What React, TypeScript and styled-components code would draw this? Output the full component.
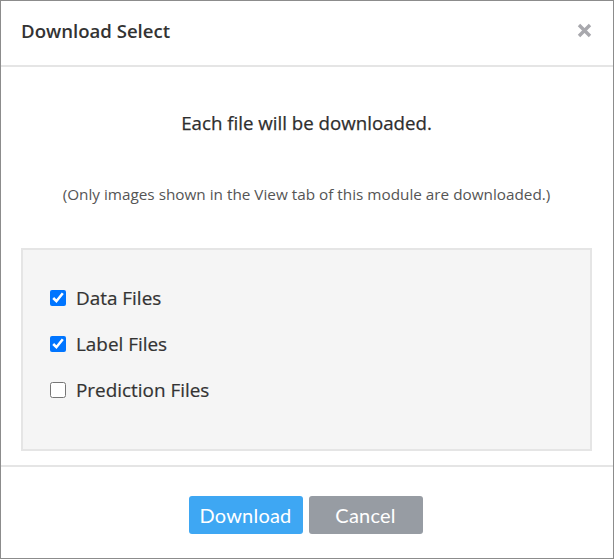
import React from "react";
import styled, { createGlobalStyle } from "styled-components";

const Global = createGlobalStyle`
  html, body { margin: 0; padding: 0; background: #fff; }
  body { font-family: "Open Sans", "Noto Sans", sans-serif; color: #333; }
`;

const Modal = styled.div`
  width: 614px;
  height: 559px;
  box-sizing: border-box;
  border: 1px solid #8c8c8c;
  display: flex;
  flex-direction: column;
  background: #fff;
`;

const Header = styled.div`
  height: 66px;
  box-sizing: border-box;
  flex: none;
  display: flex;
  align-items: center;
  justify-content: space-between;
  padding: 0 21px 6px 20px;
  border-bottom: 2px solid #e5e5e5;
`;

const Title = styled.h4`
  margin: 0;
  font-size: 18.6px;
  font-weight: 600;
  color: #333;
`;

const CloseButton = styled.button`
  border: none;
  background: none;
  padding: 0;
  width: 16px;
  height: 16px;
  display: flex;
  align-items: center;
  justify-content: center;
  cursor: pointer;
`;

const Body = styled.div`
  flex: 1;
  display: flex;
  flex-direction: column;
  align-items: stretch;
  padding: 0 21px 14px 20px;
  border-bottom: 2px solid #e5e5e5;
`;

const Lead = styled.p`
  margin: 43px 0 0;
  text-align: center;
  font-size: 18.7px;
  font-weight: 400;
  color: #2e2e2e;
  -webkit-text-stroke: 0.25px #2e2e2e;
`;

const Note = styled.p`
  margin: 49px 0 0;
  text-align: center;
  font-size: 15.3px;
  color: #555;
`;

const OptionsBox = styled.div`
  margin-top: 44px;
  flex: 1;
  background: #f5f5f5;
  border: 2px solid #e5e5e5;
  padding: 34px 27px;
  display: flex;
  flex-direction: column;
  gap: 18px;
`;

const Option = styled.label`
  display: flex;
  align-items: center;
  gap: 10px;
  font-size: 18.9px;
  font-weight: 400;
  color: #333;
  -webkit-text-stroke: 0.2px #333;
  height: 28px;
`;

const Check = styled.input`
  width: 16px;
  height: 16px;
  margin: 0;
  accent-color: #0075ff;
`;

const Footer = styled.div`
  flex: none;
  height: 91px;
  box-sizing: border-box;
  display: flex;
  align-items: center;
  justify-content: center;
  gap: 6px;
  padding: 4px 3px 0 0;
`;

const Button = styled.button<{ $variant: "primary" | "secondary" }>`
  width: 114px;
  height: 38px;
  border: none;
  border-radius: 3px;
  color: #fff;
  font-family: "Lato", "Open Sans", sans-serif;
  font-size: 20px;
  font-weight: 400;
  letter-spacing: 0.2px;
  background: ${(p) => (p.$variant === "primary" ? "#3ea7f3" : "#979ca3")};
  cursor: pointer;
`;

export default function App() {
  return (
    <>
      <Global />
      <Modal>
        <Header>
          <Title>Download Select</Title>
          <CloseButton aria-label="Close">
            <svg width="15" height="15" viewBox="0 0 15 15">
              <path d="M2 2 L13 13 M13 2 L2 13" stroke="#a8a8ad" strokeWidth="3.4" strokeLinecap="butt" />
            </svg>
          </CloseButton>
        </Header>
        <Body>
          <Lead>Each file will be downloaded.</Lead>
          <Note>(Only images shown in the View tab of this module are downloaded.)</Note>
          <OptionsBox>
            <Option>
              <Check type="checkbox" defaultChecked />
              Data Files
            </Option>
            <Option>
              <Check type="checkbox" defaultChecked />
              Label Files
            </Option>
            <Option>
              <Check type="checkbox" />
              Prediction Files
            </Option>
          </OptionsBox>
        </Body>
        <Footer>
          <Button $variant="primary">Download</Button>
          <Button $variant="secondary">Cancel</Button>
        </Footer>
      </Modal>
    </>
  );
}
